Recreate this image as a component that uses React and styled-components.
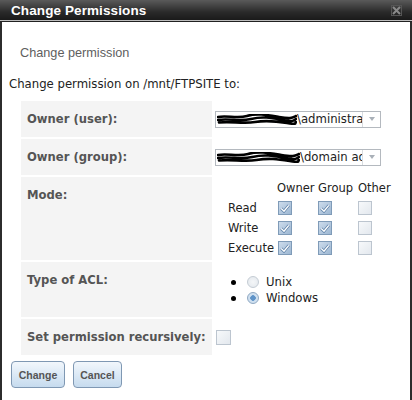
import React from 'react';
import styled, { createGlobalStyle } from 'styled-components';

const GlobalStyle = createGlobalStyle`
  html, body { margin: 0; padding: 0; background: #fff; }
  body { font-family: "DejaVu Sans", Verdana, sans-serif; }
`;

const Dialog = styled.div`
  width: 412px;
  height: 400px;
  display: flex;
  flex-direction: column;
  overflow: hidden;
  background: #fff;
`;

const TitleBar = styled.div`
  height: 20px;
  flex: none;
  display: flex;
  align-items: center;
  justify-content: space-between;
  padding: 0 10px 0 11px;
  background: linear-gradient(#5a5a5a, #2a2a2a 60%, #1a1a1a);
  border-bottom: 1px solid #bdbdbd;
  box-shadow: 0 1px 0 #222;
  margin-bottom: 1px;
`;

const Title = styled.span`
  color: #fff;
  font-family: "Liberation Sans", Arial, sans-serif;
  font-weight: bold;
  font-size: 13.5px;
  letter-spacing: 0.1px;
`;

const Body = styled.div`
  flex: 1;
  border-left: 2px solid #2c2c2c;
  border-right: 2px solid #2c2c2c;
  padding-top: 23px;
`;

const Heading = styled.div`
  font-family: "Liberation Sans", Arial, sans-serif;
  font-size: 12.7px;
  line-height: 16px;
  color: #5e5e5e;
  padding-left: 18px;
`;

const Intro = styled.div`
  margin-top: 15px;
  font-size: 11.7px;
  line-height: 16px;
  color: #222;
  padding-left: 7px;
`;

const Form = styled.div`
  margin: 9px 0 0 19px;
  display: grid;
  grid-template-columns: 191px 1fr;
  row-gap: 2px;
  column-gap: 1px;
`;

const Label = styled.div`
  height: ${p => p.$h}px;
  background: #f4f4f4;
  box-sizing: border-box;
  padding: ${p => (p.$top ? '11px 0 0 6px' : '0 0 0 6px')};
  display: flex;
  align-items: ${p => (p.$top ? 'flex-start' : 'center')};
  white-space: nowrap;
  font-weight: bold;
  font-size: 11.6px;
  line-height: 14px;
  color: #555;
`;

const Value = styled.div`
  height: ${p => p.$h}px;
  box-sizing: border-box;
  padding: ${p => p.$pad || '0 0 0 2px'};
  display: flex;
  align-items: ${p => (p.$top ? 'flex-start' : 'center')};
  font-size: 11.7px;
  color: #222;
`;

const Select = styled.div`
  width: 166px;
  height: 17px;
  box-sizing: border-box;
  border: 1px solid #b4b9bf;
  display: flex;
  align-items: center;
  background: #fff;
`;

const SelectText = styled.div`
  flex: 1;
  min-width: 0;
  overflow: hidden;
  white-space: nowrap;
  display: flex;
  align-items: center;
  font-size: 11.7px;
  color: #222;
  padding-left: 1px;
  & > svg { flex: none; }
`;

const SelectArrow = styled.div`
  width: 17px;
  flex: none;
  height: 100%;
  border-left: 1px solid #d8dce0;
  display: flex;
  align-items: center;
  justify-content: center;
  &::after {
    content: '';
    border-left: 3px solid transparent;
    border-right: 3px solid transparent;
    border-top: 4px solid #a9b0b8;
  }
`;

const ModeGrid = styled.div`
  display: grid;
  grid-template-columns: 49px 41px 40px auto;
  grid-auto-rows: 20px;
  align-items: center;
  font-size: 11.5px;
  color: #222;
`;

const BoxCell = styled.div`
  display: flex;
  align-items: center;
  padding-left: ${p => p.$pl ?? 1}px;
`;

const Box = styled.span`
  width: ${p => p.$size}px;
  height: ${p => p.$size}px;
  box-sizing: border-box;
  display: inline-flex;
  align-items: center;
  justify-content: center;
  border: 1px solid ${p => (p.$checked ? '#7f9bb8' : '#bcc5cf')};
  background: ${p =>
    p.$checked
      ? 'linear-gradient(135deg, #cddcec, #9db7d2)'
      : 'linear-gradient(135deg, #f7f9fb, #e3e8ee)'};
`;

const RadioList = styled.div`
  display: flex;
  flex-direction: column;
`;

const RadioRow = styled.div`
  height: 16px;
  display: flex;
  align-items: center;
  font-size: 11.7px;
  color: #222;
`;

const Bullet = styled.span`
  width: 5px;
  height: 5px;
  border-radius: 50%;
  background: #000;
  margin-right: 11px;
`;

const Radio = styled.span`
  width: 12px;
  height: 12px;
  box-sizing: border-box;
  border-radius: 50%;
  border: 1px solid ${p => (p.$checked ? '#8fa8c2' : '#c4ccd4')};
  background: ${p =>
    p.$checked
      ? 'radial-gradient(circle, #5e93c8 0 2.5px, #cfe0f0 3px)'
      : 'radial-gradient(circle, #f4f6f8, #e2e7ec)'};
  margin-right: 7px;
`;

const Buttons = styled.div`
  display: flex;
  gap: 8px;
  margin: 6px 0 0 9px;
`;

const Button = styled.button`
  height: 27px;
  width: ${p => p.$w}px;
  box-sizing: border-box;
  border: 1px solid #7f98b3;
  border-radius: 4px;
  background: linear-gradient(#f2f7fc, #d7e6f4 60%, #c6dbee);
  font-family: "Liberation Sans", Arial, sans-serif;
  font-weight: bold;
  font-size: 10.5px;
  color: #555;
  padding: 0;
`;

function Check({ size = 14, checked }) {
  return (
    <Box $size={size} $checked={checked}>
      {checked && (
        <svg width="10" height="9" viewBox="0 0 10 9">
          <path d="M1.2 4.6 L4 7.2 L8.8 1.4" fill="none" stroke="#5f82a8" strokeWidth="2.8" />
          <path d="M1.2 4.6 L4 7.2 L8.8 1.4" fill="none" stroke="#fff" strokeWidth="1.4" />
        </svg>
      )}
    </Box>
  );
}

function Scribble({ w }) {
  return (
    <svg width={w} height="11" viewBox="0 0 80 11" preserveAspectRatio="none">
      <path
        d="M1 3 C10 1 20 5 30 2 S50 1 62 3 S75 4 79 2 M1 6 C12 4 22 8 34 5 S55 4 66 6 S76 7 79 5 M2 8.5 C14 7 26 10 38 8 S58 7 70 9 S77 9 79 8"
        fill="none"
        stroke="#000"
        strokeWidth="2.6"
        strokeLinecap="round"
      />
    </svg>
  );
}

function CloseIcon() {
  return (
    <svg width="11" height="11" viewBox="0 0 11 11">
      <rect x="0.5" y="0.5" width="10" height="10" fill="none" stroke="#555" />
      <path d="M2 2 L9 9 M9 2 L2 9" stroke="#8a8a8a" strokeWidth="2" />
    </svg>
  );
}

const modes = [
  ['Read', true, true, false],
  ['Write', true, true, false],
  ['Execute', true, true, false],
];

export default function App() {
  return (
    <>
      <GlobalStyle />
      <Dialog>
        <TitleBar>
          <Title>Change Permissions</Title>
          <CloseIcon />
        </TitleBar>
        <Body>
          <Heading>Change permission</Heading>
          <Intro>Change permission on /mnt/FTPSITE to:</Intro>
          <Form>
            <Label $h={36}>Owner (user):</Label>
            <Value $h={36}>
              <Select>
                <SelectText>
                  <Scribble w={80} />\administrator
                </SelectText>
                <SelectArrow />
              </Select>
            </Value>

            <Label $h={36}>Owner (group):</Label>
            <Value $h={36}>
              <Select>
                <SelectText>
                  <Scribble w={83} />\domain admins
                </SelectText>
                <SelectArrow />
              </Select>
            </Value>

            <Label $h={83} $top>Mode:</Label>
            <Value $h={83} $top $pad="1px 0 0 15px">
              <ModeGrid>
                <span />
                <span>Owner</span>
                <span>Group</span>
                <span>Other</span>
                {modes.map(([name, o, g, x]) => (
                  <React.Fragment key={name}>
                    <span>{name}</span>
                    <BoxCell><Check checked={o} /></BoxCell>
                    <BoxCell $pl={0}><Check checked={g} /></BoxCell>
                    <BoxCell $pl={0}><Check checked={x} /></BoxCell>
                  </React.Fragment>
                ))}
              </ModeGrid>
            </Value>

            <Label $h={55} $top>Type of ACL:</Label>
            <Value $h={55} $top $pad="12px 0 0 18px">
              <RadioList>
                <RadioRow><Bullet /><Radio />Unix</RadioRow>
                <RadioRow><Bullet /><Radio $checked />Windows</RadioRow>
              </RadioList>
            </Value>

            <Label $h={36}>Set permission recursively:</Label>
            <Value $h={36} $pad="0 0 0 3px">
              <Check size={15} checked={false} />
            </Value>
          </Form>
          <Buttons>
            <Button $w={54}>Change</Button>
            <Button $w={49}>Cancel</Button>
          </Buttons>
        </Body>
      </Dialog>
    </>
  );
}
